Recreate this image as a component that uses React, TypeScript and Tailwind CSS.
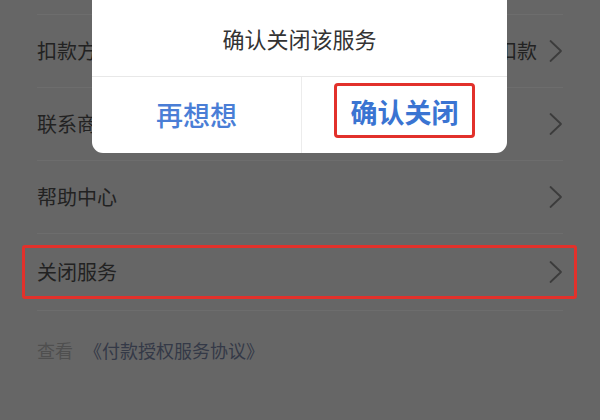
import React from "react";

const Chevron = () => (
  <svg width="14" height="24" viewBox="0 0 14 24" fill="none" className="shrink-0">
    <polyline points="1.5,2 12,12 1.5,22" stroke="#3c3c3c" strokeWidth="1.8" strokeLinecap="round" strokeLinejoin="round" />
  </svg>
);

export default function App() {
  const font = { fontFamily: '"Noto Sans CJK SC", "Noto Sans", sans-serif' };
  return (
    <div className="relative w-[600px] h-[420px] overflow-hidden bg-[#666666]" style={font}>
      <div className="px-[37px]">
        <div className="h-[15px] border-b border-[#6d6d6d]" />
        <div className="h-[73px] border-b border-[#6d6d6d] flex items-center justify-between">
          <span className="text-[20px] text-[#222]">扣款方式</span>
          <div className="flex items-center gap-[12px]">
            <span className="text-[20px] text-[#222]">自动扣款</span>
            <Chevron />
          </div>
        </div>
        <div className="h-[73px] border-b border-[#6d6d6d] flex items-center justify-between">
          <span className="text-[20px] text-[#222]">联系商家</span>
          <Chevron />
        </div>
        <div className="h-[73px] border-b border-[#6d6d6d] flex items-center justify-between">
          <span className="text-[20px] text-[#222]">帮助中心</span>
          <Chevron />
        </div>
        <div className="relative h-[77px] border-b border-[#6d6d6d] flex items-center justify-between">
          <span className="text-[20px] text-[#222]">关闭服务</span>
          <Chevron />
          <div className="absolute -left-[15px] -right-[14px] top-[11px] bottom-[11px] border-[3px] border-[#e2312b] rounded-[3px]" />
        </div>
        <div className="mt-[26px] text-[18px] leading-[26px] flex">
          <span className="text-[#4f4f4f]">查看</span>
          <span className="ml-[11px] text-[#343947]">《付款授权服务协议》</span>
        </div>
      </div>

      <div className="absolute left-[92px] top-0 w-[415px] h-[153px] bg-white rounded-b-[11px] flex flex-col">
        <div className="h-[77px] border-b border-[#e8e8e8] flex items-center justify-center text-[22px] text-[#333]">
          确认关闭该服务
        </div>
        <div className="flex flex-1">
          <div className="w-[210px] border-r border-[#ececec] flex items-center justify-center text-[27px] font-medium text-[#4a7ed6]">
            再想想
          </div>
          <div className="flex-1 flex items-start justify-center pt-[6px]">
            <div className="w-[141px] h-[55px] border-[3px] border-[#e2312b] rounded-[4px] flex items-center justify-center pt-[3px] text-[27px] font-bold text-[#3a74d2]">
              确认关闭
            </div>
          </div>
        </div>
      </div>
    </div>
  );
}
